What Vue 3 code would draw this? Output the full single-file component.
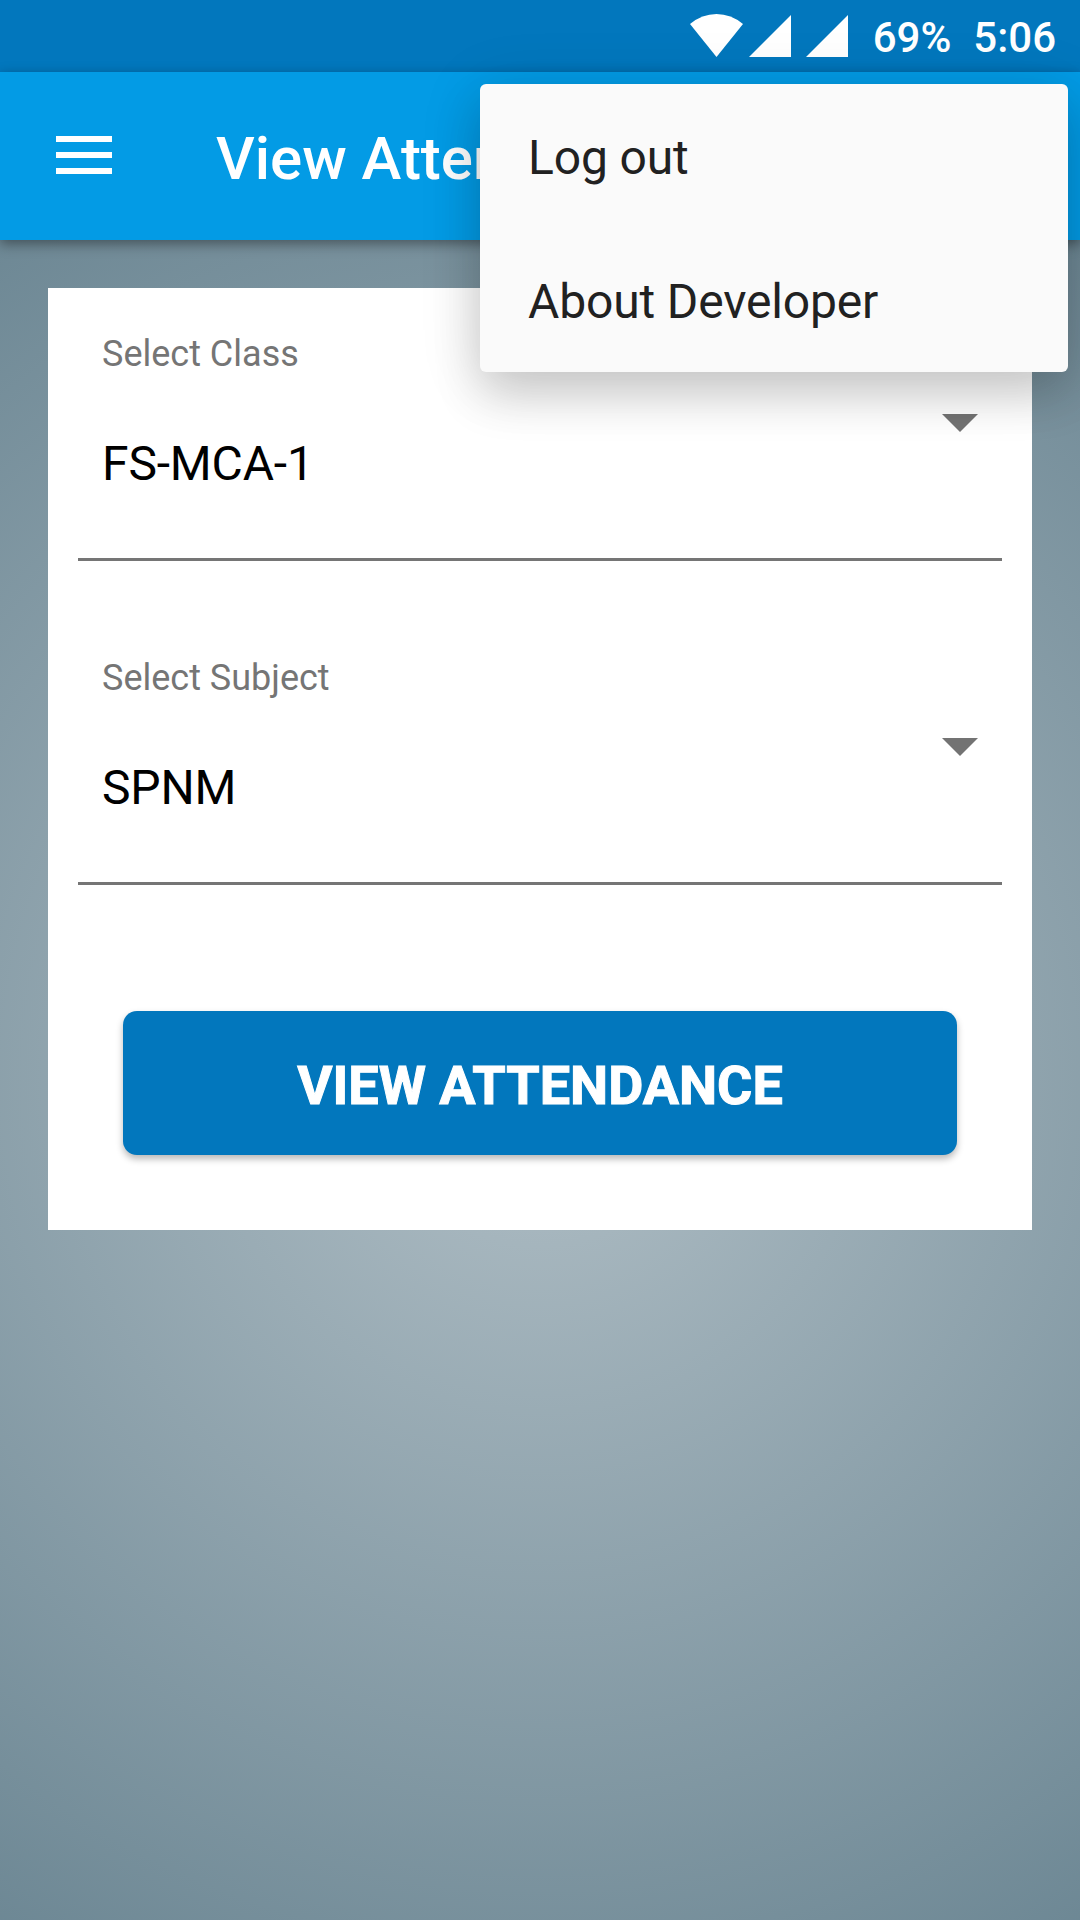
<script setup>
import { ref } from 'vue'

const fields = ref([
  { label: 'Select Class', value: 'FS-MCA-1' },
  { label: 'Select Subject', value: 'SPNM' },
])
const menuItems = ['Log out', 'About Developer']
</script>

<template>
  <div class="screen">
    <header class="status">
      <svg class="wifi" viewBox="0 0 53 43" width="53" height="43">
        <path d="M0 10Q12 0 26.500 0T53 10L26.500 43Z" fill="#fff" />
      </svg>
      <svg v-for="n in 2" :key="n" class="signal" viewBox="0 0 42 42" width="42" height="42">
        <path d="M42 0V42H0Z" fill="#fff" />
      </svg>
      <span class="battery">69%</span>
      <span class="time">5:06</span>
    </header>

    <div class="toolbar">
      <svg class="burger" viewBox="0 0 56 38" width="56" height="38">
        <path d="M0 0H56V6H0ZM0 16H56V22H0ZM0 32H56V38H0Z" fill="#fff" />
      </svg>
      <h1 class="title">View Attendance</h1>
    </div>

    <main class="content">
      <section class="card">
        <div v-for="f in fields" :key="f.label" class="field">
          <div class="texts">
            <span class="label">{{ f.label }}</span>
            <span class="value">{{ f.value }}</span>
          </div>
          <svg class="arrow" viewBox="0 0 36 18" width="36" height="18">
            <path d="M0 0H36L18 18Z" fill="#737373" />
          </svg>
        </div>
        <button class="submit">VIEW ATTENDANCE</button>
      </section>
    </main>

    <nav class="menu">
      <div v-for="m in menuItems" :key="m" class="item">{{ m }}</div>
    </nav>
  </div>
</template>

<style>
body {
  margin: 0;
}
</style>

<style scoped>
.screen {
  position: relative;
  box-sizing: border-box;
  width: 1080px;
  height: 1920px;
  overflow: hidden;
  display: flex;
  flex-direction: column;
  font-family: Roboto, sans-serif;
  background: radial-gradient(circle 1200px at 540px 1080px, #b0bec5, #607d8b);
}
.status {
  box-sizing: border-box;
  height: 72px;
  flex: none;
  display: flex;
  align-items: flex-start;
  justify-content: flex-end;
  padding: 14px 24px 0 0;
  background: #0277bd;
  color: #fff;
  font-size: 42px;
  font-weight: 500;
  line-height: 48px;
}
.wifi {
  margin-right: 6px;
}
.signal {
  margin: 1px 15px 0 0;
}
.battery {
  margin: 0 22px 0 10px;
}
.toolbar {
  height: 168px;
  flex: none;
  display: flex;
  align-items: center;
  background: #039be5;
  box-shadow: 0 4px 12px rgba(0, 0, 0, 0.4);
}
.burger {
  margin: 0 104px 2px 56px;
}
.title {
  margin: 5px 0 0;
  color: #fff;
  font-size: 60px;
  font-weight: 500;
  line-height: 70px;
  white-space: nowrap;
}
.content {
  padding: 48px;
}
.card {
  box-sizing: border-box;
  height: 942px;
  padding: 0 30px;
  background: #fff;
}
.field {
  box-sizing: border-box;
  display: flex;
  justify-content: space-between;
  height: 273px;
  padding: 45px 24px 0;
  border-bottom: 3px solid #757575;
}
.field + .field {
  height: 324px;
  padding-top: 96px;
}
.texts {
  display: flex;
  flex-direction: column;
  gap: 60px;
}
.label {
  color: #757575;
  font-size: 36px;
  line-height: 42px;
}
.value {
  color: #000;
  font-size: 48px;
  line-height: 57px;
  letter-spacing: -0.15px;
}
.arrow {
  margin-top: 81px;
}
.submit {
  display: block;
  width: 834px;
  height: 144px;
  margin: 126px auto 0;
  padding: 5px 0 0;
  border: 0;
  border-radius: 14px;
  background: #0277bd;
  color: #fff;
  font-family: inherit;
  font-size: 54px;
  font-weight: 700;
  -webkit-text-stroke: 1px #fff;
  box-shadow: 0 4px 7px rgba(0, 0, 0, 0.28);
}
.menu {
  position: absolute;
  top: 84px;
  right: 12px;
  width: 588px;
  border-radius: 6px;
  background: #fafafa;
  box-shadow: 0 24px 48px rgba(0, 0, 0, 0.16), 0 6px 64px rgba(0, 0, 0, 0.12);
}
.item {
  box-sizing: border-box;
  height: 144px;
  padding: 4px 48px 0;
  color: #212121;
  font-size: 48px;
  line-height: 140px;
  letter-spacing: -0.15px;
}
</style>
